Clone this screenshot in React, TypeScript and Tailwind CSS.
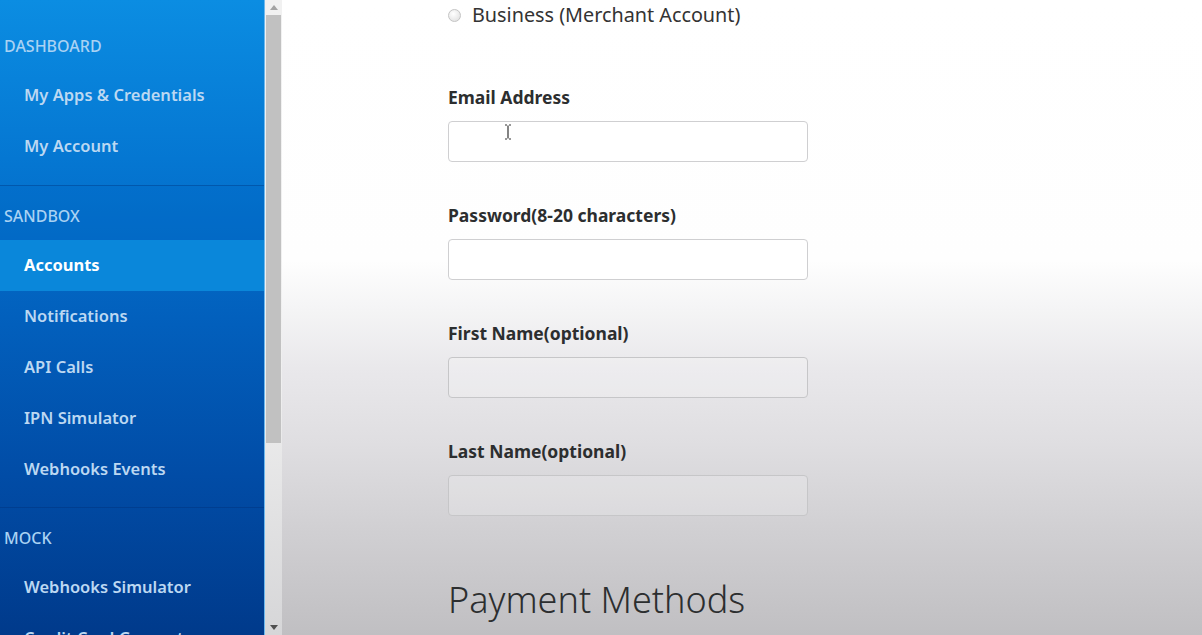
import React from "react";

function NavItem({ label, active }: { label: string; active?: boolean }) {
  return (
    <div
      className={
        "h-[51px] shrink-0 flex items-center pl-6 text-[16.5px] " +
        (active ? "bg-[#0a87da] text-white font-bold" : "text-[#bcd8f2] font-semibold")
      }
    >
      {label}
    </div>
  );
}

function SectionHead({ label }: { label: string }) {
  return (
    <div className="h-[54px] shrink-0 pt-[6px] flex items-center pl-1 text-[16px] text-[#a9d2f3] font-medium">
      {label}
    </div>
  );
}

function Field({ label, disabled }: { label: string; disabled?: boolean }) {
  return (
    <div className="flex flex-col">
      <div className="h-[24px] flex items-center text-[17.5px] font-bold text-[#2c2e2f]">{label}</div>
      <div
        className={
          "mt-[12px] w-[360px] h-[41px] rounded-[4px] border " +
          (disabled ? "border-[#c6c6c8] bg-white/20" : "border-[#cfcfd1] bg-white")
        }
      />
    </div>
  );
}

export default function App() {
  return (
    <div
      className="w-[1202px] h-[635px] overflow-hidden flex"
      style={{ fontFamily: '"Noto Sans", "Open Sans", sans-serif' }}
    >
      {/* Sidebar */}
      <div className="w-[265px] shrink-0 h-full overflow-hidden bg-[linear-gradient(to_bottom,#0b8de2_0%,#0577d2_25%,#0260bd_50%,#014ca6_75%,#003a8b_100%)] flex flex-col pt-[16px] border-r border-[#6cb8ee]">
        <SectionHead label="DASHBOARD" />
        <NavItem label="My Apps & Credentials" />
        <NavItem label="My Account" />
        <div className="h-[13px] shrink-0" />
        <div className="shrink-0 border-t border-[#0158ad] bg-[#0067c2]/30">
          <SectionHead label="SANDBOX" />
        </div>
        <NavItem label="Accounts" active />
        <NavItem label="Notifications" />
        <NavItem label="API Calls" />
        <NavItem label="IPN Simulator" />
        <NavItem label="Webhooks Events" />
        <div className="h-[12px] shrink-0" />
        <div className="shrink-0 border-t border-[#003e90]">
          <SectionHead label="MOCK" />
        </div>
        <NavItem label="Webhooks Simulator" />
        <NavItem label="Credit Card Generator" />
      </div>

      {/* Scrollbar */}
      <div className="w-[17px] shrink-0 h-full bg-[linear-gradient(to_bottom,#f1f1f1_0%,#efefef_60%,#d6d6d8_100%)] flex flex-col">
        <div className="h-[15px] flex items-center justify-center">
          <svg width="8" height="5" viewBox="0 0 8 5">
            <path d="M0 5 L4 0 L8 5 Z" fill="#a3a3a3" />
          </svg>
        </div>
        <div className="mx-[1px] h-[428px] bg-[#c1c1c1]" />
        <div className="flex-1" />
        <div className="h-[15px] flex items-center justify-center">
          <svg width="8" height="5" viewBox="0 0 8 5">
            <path d="M0 0 L8 0 L4 5 Z" fill="#505050" />
          </svg>
        </div>
      </div>

      {/* Main */}
      <div className="flex-1 h-full bg-[linear-gradient(to_bottom,#ffffff_0%,#fefefe_41%,#f4f4f5_49%,#e9e8eb_58%,#dfdee1_70%,#d1d0d3_83%,#c0bfc2_100%)] pl-[166px] relative">
        <div className="flex items-center h-[30px]">
          <div className="w-[13px] h-[13px] rounded-full border border-[#c4c4c4] bg-[radial-gradient(circle_at_40%_35%,#ffffff,#dcdcdc)]" />
          <span className="ml-[11px] text-[19.8px] text-[#333]">Business (Merchant Account)</span>
        </div>
        <div className="mt-[55px] flex flex-col gap-[41px]">
          <Field label="Email Address" />
          <Field label="Password(8-20 characters)" />
          <Field label="First Name(optional)" disabled />
          <Field label="Last Name(optional)" disabled />
        </div>
        <div className="mt-[64px] text-[36px] leading-[40px] text-[#2c2e2f] font-light whitespace-nowrap">
          Payment Methods
        </div>

        {/* Text cursor */}
        <svg className="absolute left-[222px] top-[124px]" width="8" height="16" viewBox="0 0 8 16">
          <path d="M1 1 H3 M5 1 H7 M4 1.5 V14.5 M1 15 H3 M5 15 H7" stroke="#333" strokeWidth="1.2" fill="none" />
        </svg>
      </div>
    </div>
  );
}
